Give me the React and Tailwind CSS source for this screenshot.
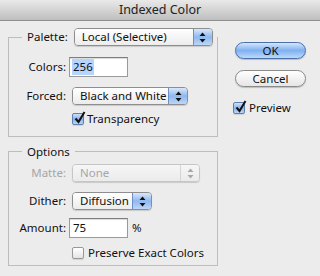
/* Indexed Color – Mac OS X style dialog */
import clsx from "clsx";

const font = { fontFamily: "'Lucida Grande', 'Noto Sans', 'Liberation Sans', sans-serif" };

function Arrows({ disabled }) {
    const c = disabled ? "#a8a8a8" : "#111";
    return (
        <svg width="7" height="11" viewBox="0 0 7 11">
            <path d="M3.5 0.5 L6.5 4 L0.5 4 Z" fill={c} />
            <path d="M3.5 10.5 L6.5 7 L0.5 7 Z" fill={c} />
        </svg>
    );
}

function Popup({ label, className, disabled }) {
    return (
        <div
            className={clsx(
                "flex h-[18px] rounded-[4px] border shadow-[0_1px_1px_rgba(0,0,0,0.15)] overflow-hidden",
                disabled ? "border-[#c6c6c6]" : "border-[#8e8e8e]",
                className,
            )}
        >
            <div
                className={clsx(
                    "flex-1 flex items-center pl-[7px] text-[11.5px] leading-none whitespace-nowrap bg-gradient-to-b",
                    disabled
                        ? "from-[#f6f6f6] to-[#ebebeb] text-[#a6a6a6]"
                        : "from-[#ffffff] to-[#ececec] text-[#111]",
                )}
            >
                {label}
            </div>
            <div
                className={clsx(
                    "w-[19px] shrink-0 flex items-center justify-center border-l bg-gradient-to-b",
                    disabled
                        ? "border-[#d4d4d4] from-[#f6f6f6] to-[#ebebeb]"
                        : "border-[#6f8fc4] from-[#d9e8fb] via-[#8fb8ee] to-[#bcd6f7]",
                )}
            >
                <Arrows disabled={disabled} />
            </div>
        </div>
    );
}

function Check({ checked }) {
    return (
        <div
            className={clsx(
                "relative w-[12px] h-[12px] shrink-0 rounded-[2px] border shadow-[0_1px_1px_rgba(0,0,0,0.12)] bg-gradient-to-b",
                checked
                    ? "border-[#5f7fae] from-[#cfe1f8] via-[#86b2ea] to-[#b9d5f6]"
                    : "border-[#989898] from-[#ffffff] to-[#e4e4e4]",
            )}
        >
            {checked && (
                <svg className="absolute left-[1px] -top-[3px]" width="12" height="13" viewBox="0 0 12 13">
                    <path d="M1.5 7.5 L4.5 11 L10.5 1" stroke="#111" strokeWidth="2" fill="none" />
                </svg>
            )}
        </div>
    );
}

function TextInput({ value, selected }) {
    return (
        <div className="w-[59px] h-[20px] bg-white border border-[#9a9a9a] border-t-[#7d7d7d] shadow-[inset_0_1px_1px_rgba(0,0,0,0.15)] flex items-center pl-[2px] text-[11.5px] leading-none text-[#111]">
            <span className={clsx("px-[1px] py-[2px]", selected && "bg-[#b5d5ff]")}>{value}</span>
        </div>
    );
}

function Label({ children, disabled }) {
    return (
        <div
            className={clsx(
                "w-[57px] text-right text-[11.5px] leading-none whitespace-nowrap",
                disabled ? "text-[#a6a6a6]" : "text-[#111]",
            )}
        >
            {children}
        </div>
    );
}

export default function App() {
    return (
        <div className="w-[320px] h-[276px] bg-[#ececec] flex flex-col overflow-hidden" style={font}>
            {/* title bar */}
            <div className="h-[21px] shrink-0 flex items-center justify-center bg-gradient-to-b from-[#e9e9e9] to-[#bfbfbf] border-b border-[#8f8f8f] text-[12.5px] text-[#222]">
                Indexed Color
            </div>

            <div className="flex pl-[8px] pt-[7px]">
                {/* left column */}
                <div className="w-[210px] flex flex-col">
                    <fieldset className="border border-[#bdbdbd] pb-[11px]">
                        <legend className="ml-[13px] flex items-center pr-[4px]">
                            <span className="pl-[5px] pr-[6px] text-[11.5px] leading-none text-[#111]">Palette:</span>
                            <Popup label="Local (Selective)" className="w-[139px]" />
                        </legend>
                        <div className="flex items-center mt-[11px]">
                            <Label>Colors:</Label>
                            <div className="ml-[3px]">
                                <TextInput value="256" selected />
                            </div>
                        </div>
                        <div className="flex items-center mt-[10px]">
                            <Label>Forced:</Label>
                            <Popup label="Black and White" className="ml-[6px] w-[116px]" />
                        </div>
                        <div className="flex items-center mt-[8px] ml-[63px]">
                            <Check checked />
                            <span className="ml-[3px] text-[11.5px] leading-none text-[#111]">Transparency</span>
                        </div>
                    </fieldset>

                    <fieldset className="border border-[#bdbdbd] mt-[7px] pb-[6px]">
                        <legend className="ml-[13px] px-[5px] text-[11.5px] leading-[15px] text-[#111]">Options</legend>
                        <div className="flex items-center mt-[5px]">
                            <Label disabled>Matte:</Label>
                            <Popup label="None" className="ml-[6px] w-[128px]" disabled />
                        </div>
                        <div className="flex items-center mt-[10px]">
                            <Label>Dither:</Label>
                            <Popup label="Diffusion" className="ml-[6px] w-[80px]" />
                        </div>
                        <div className="flex items-center mt-[8px]">
                            <Label>Amount:</Label>
                            <div className="ml-[3px]">
                                <TextInput value="75" />
                            </div>
                            <span className="ml-[4px] text-[11.5px] leading-none text-[#111]">%</span>
                        </div>
                        <div className="flex items-center mt-[9px] ml-[63px]">
                            <Check />
                            <span className="ml-[4px] text-[11.5px] leading-none text-[#111]">Preserve Exact Colors</span>
                        </div>
                    </fieldset>
                </div>

                {/* right column */}
                <div className="flex flex-col ml-[17px] pt-[14px]">
                    <button className="w-[71px] h-[17px] rounded-full border border-[#4d6fa8] bg-gradient-to-b from-[#d5e6fb] via-[#7fb0ef] to-[#bcd9fb] text-[11.5px] leading-none text-[#111] shadow-[0_1px_1px_rgba(0,0,0,0.2)]">
                        OK
                    </button>
                    <button className="mt-[11px] w-[71px] h-[17px] rounded-full border border-[#8a8a8a] bg-gradient-to-b from-[#ffffff] to-[#e6e6e6] text-[11.5px] leading-none text-[#111] shadow-[0_1px_1px_rgba(0,0,0,0.2)]">
                        Cancel
                    </button>
                    <div className="flex items-center mt-[15px] ml-[-2px]">
                        <Check checked />
                        <span className="ml-[4px] text-[11.5px] leading-none text-[#111]">Preview</span>
                    </div>
                </div>
            </div>
        </div>
    );
}
